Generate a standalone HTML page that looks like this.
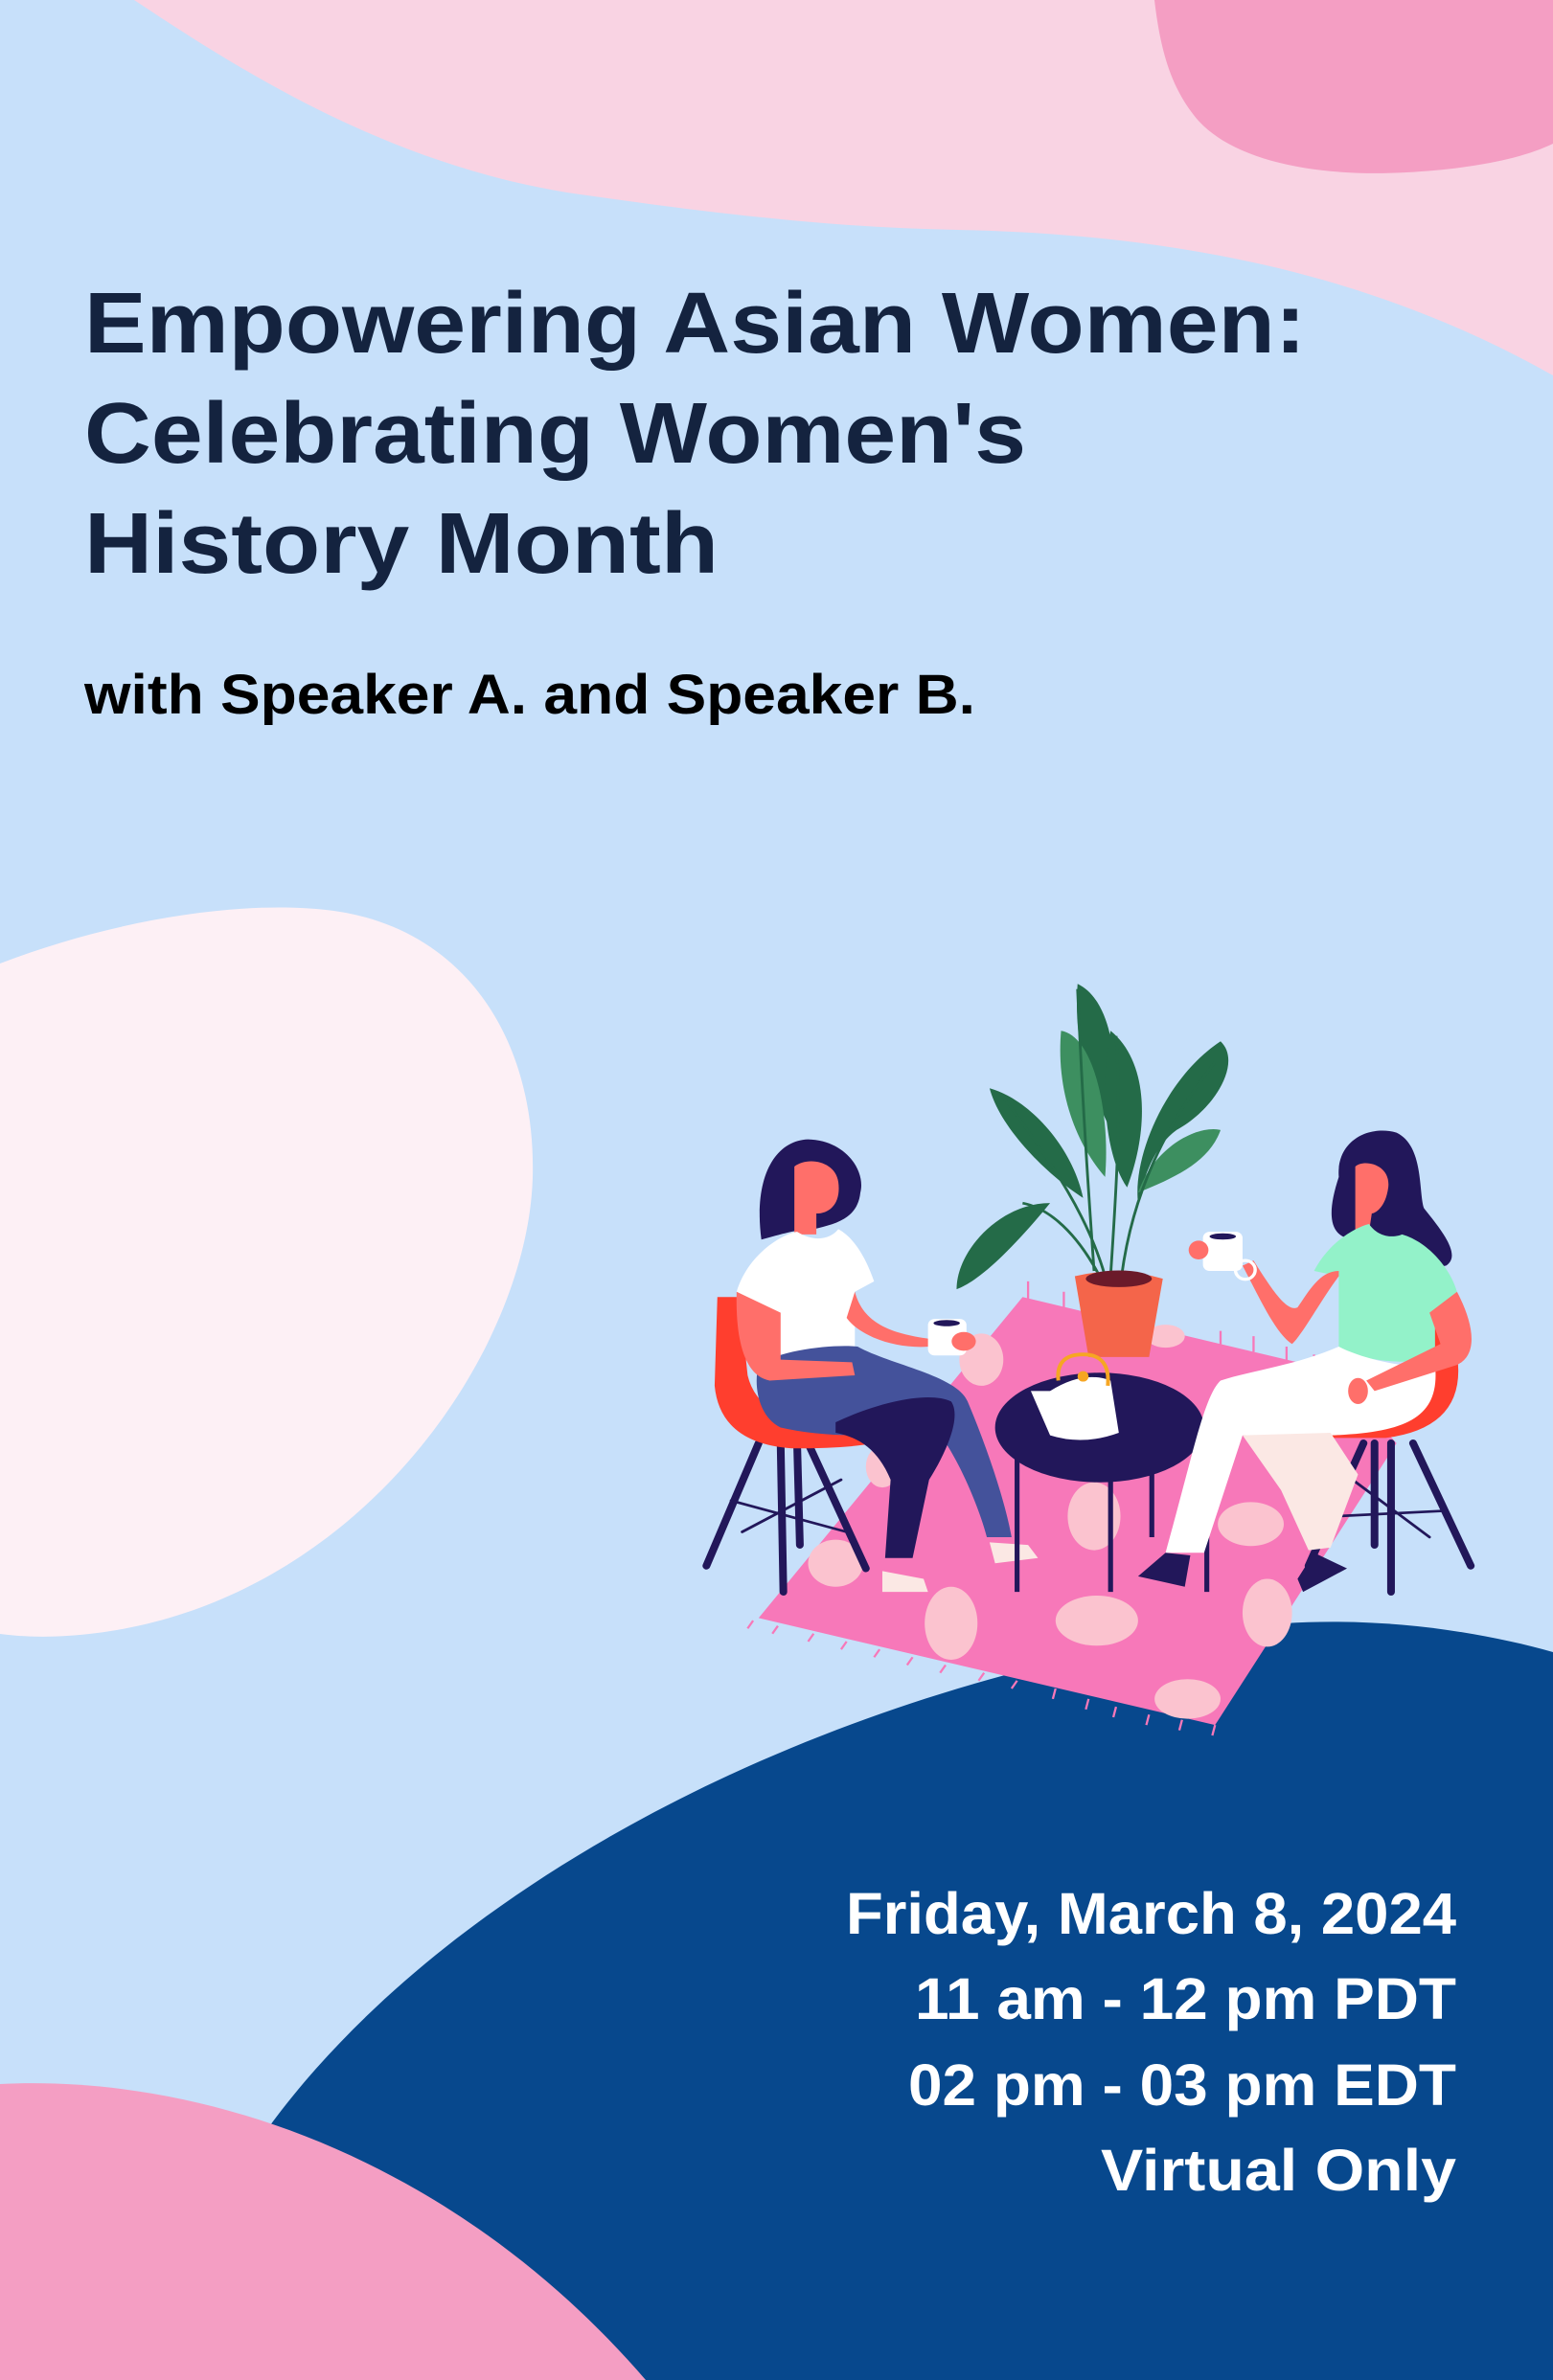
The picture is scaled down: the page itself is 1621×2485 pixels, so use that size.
<!DOCTYPE html>
<html><head><meta charset="utf-8"><style>
html,body{margin:0;padding:0;background:#c7e0fa}
svg{display:block}
</style></head><body>
<svg width="1621" height="2485" viewBox="0 0 1621 2485" xmlns="http://www.w3.org/2000/svg">
<rect width="1621" height="2485" fill="#c7e0fa"/>
<path d="M140,0 C260,80 420,180 620,205 C760,225 880,238 1000,240 C1240,245 1440,290 1621,392 L1621,0 Z" fill="#f9d3e3"/>
<path d="M1205,0 C1212,60 1225,95 1250,125 C1290,170 1380,185 1468,180 C1540,176 1590,165 1621,150 L1621,0 Z" fill="#f49ec3"/>
<path d="M0,1006 C120,960 250,940 340,950 C480,965 560,1080 556,1230 C550,1420 360,1690 70,1708 C40,1710 15,1708 0,1706 Z" fill="#fdf0f5"/>
<path d="M282,2219 C480,1950 900,1740 1340,1695 C1450,1688 1550,1705 1621,1725 L1621,2485 L282,2485 Z" fill="#07488d"/>
<path d="M0,2176 C220,2165 480,2260 674,2485 L0,2485 Z" fill="#f49ec3"/>

<g font-family="Liberation Sans, sans-serif" font-weight="bold" fill="#14233f">
<text x="88" y="368" font-size="90" textLength="1275" lengthAdjust="spacingAndGlyphs">Empowering Asian Women:</text>
<text x="88" y="483" font-size="90" textLength="983" lengthAdjust="spacingAndGlyphs">Celebrating Women's</text>
<text x="88" y="598" font-size="90" textLength="662" lengthAdjust="spacingAndGlyphs">History Month</text>
<text x="88" y="745" font-size="58" fill="#000" textLength="930" lengthAdjust="spacingAndGlyphs">with Speaker A. and Speaker B.</text>
</g>
<g font-family="Liberation Sans, sans-serif" font-weight="bold" fill="#fff" font-size="61">
<text x="883" y="2019" textLength="637" lengthAdjust="spacingAndGlyphs">Friday, March 8, 2024</text>
<text x="955" y="2108" textLength="565" lengthAdjust="spacingAndGlyphs">11 am - 12 pm PDT</text>
<text x="948" y="2198" textLength="572" lengthAdjust="spacingAndGlyphs">02 pm - 03 pm EDT</text>
<text x="1149" y="2287" textLength="371" lengthAdjust="spacingAndGlyphs">Virtual Only</text>
</g>

<g transform="translate(700,1000) scale(0.574,0.545)">
<!-- rug -->
<polygon points="640,650 1200,790 1320,930 990,1470 160,1265" fill="#f778b9"/>
<g stroke="#f778b9" stroke-width="4">
<path d="M650,620 v40 M715,640 v30 M1000,715 v30 M1060,725 v30 M1120,745 v30 M1170,760 v30"/>
<path d="M150,1270 l-10,15 M195,1280 l-10,15 M260,1295 l-10,15 M320,1310 l-10,15 M380,1325 l-10,15 M440,1340 l-10,15 M500,1355 l-10,15 M570,1370 l-10,15 M630,1385 l-10,15 M700,1400 l-5,20 M760,1420 l-5,20 M810,1435 l-5,20 M870,1450 l-5,20 M930,1460 l-5,20 M990,1470 l-5,20"/>
</g>
<g fill="#fbc3cf">
<ellipse cx="510" cy="1275" rx="48" ry="70"/>
<ellipse cx="775" cy="1270" rx="75" ry="48"/>
<ellipse cx="1085" cy="1255" rx="45" ry="65"/>
<ellipse cx="940" cy="1420" rx="60" ry="38"/>
<ellipse cx="300" cy="1160" rx="50" ry="45"/>
<ellipse cx="770" cy="1070" rx="48" ry="65"/>
<ellipse cx="1055" cy="1085" rx="60" ry="42"/>
<ellipse cx="565" cy="770" rx="40" ry="50"/>
<ellipse cx="900" cy="725" rx="35" ry="22"/>
<ellipse cx="385" cy="975" rx="30" ry="40"/>
</g>
<!-- plant -->
<g fill="#246b48">
<path d="M740,50 C800,80 820,200 800,330 C780,280 730,200 740,50Z"/>
<path d="M800,140 C870,200 870,330 830,440 C790,380 780,250 800,140Z"/>
<path d="M1000,160 C1040,200 990,290 920,330 C880,360 860,420 850,470 C840,380 900,230 1000,160Z"/>
<path d="M580,250 C650,270 730,360 750,460 C690,420 600,330 580,250Z"/>
<path d="M690,470 C600,470 520,560 520,635 C560,620 620,560 690,470Z"/>
</g>
<g fill="#3d8f60">
<path d="M710,140 C770,150 800,300 790,420 C740,360 700,260 710,140Z"/>
<path d="M1000,330 C960,320 880,360 850,450 C920,420 980,390 1000,330Z"/>
</g>
<g stroke="#246b48" stroke-width="5" fill="none">
<path d="M770,600 C760,450 750,300 740,60 M800,610 C810,450 820,300 810,150 M820,610 C840,450 900,320 990,200 M790,610 C760,500 700,400 600,260 M780,610 C740,530 690,480 640,470"/>
</g>
<path d="M735,610 Q815,590 895,615 L870,765 L760,765 Z" fill="#f4654a"/>
<ellipse cx="815" cy="615" rx="60" ry="16" fill="#6b1a2a"/>
<!-- left chair -->
<g stroke="#22175a" stroke-width="14" stroke-linecap="round">
<path d="M160,930 L65,1165 M200,930 L205,1215 M250,930 L355,1170 M230,930 L235,1125"/>
<path d="M110,1040 L320,1100 M130,1100 L310,1000" stroke-width="5"/>
</g>
<path d="M85,650 L125,650 L140,800 Q160,890 300,900 L390,920 Q370,940 220,940 Q90,930 80,820 Z" fill="#ff3e2e"/>
<!-- left woman -->
<path d="M165,540 C150,420 190,350 250,348 C320,350 355,410 345,450 C340,500 300,510 260,520 C230,520 200,530 165,540Z" fill="#22175a"/>
<path d="M225,400 C250,380 300,390 305,430 C310,470 290,490 265,490 L265,530 L225,530 Z" fill="#ff6f6a"/>
<path d="M120,640 C140,570 200,530 230,525 C260,545 290,540 305,520 C340,540 360,590 370,620 L335,640 L335,745 C290,760 230,770 185,760 L190,680 Z" fill="#fff"/>
<path d="M160,780 C200,750 300,740 340,745 C400,780 520,800 540,850 C580,950 610,1050 620,1110 L575,1110 C560,1050 520,950 480,900 C400,920 280,920 200,900 C160,880 150,820 160,780Z" fill="#44529b"/>
<path d="M300,890 C380,850 470,830 510,850 C530,880 500,950 470,1000 L440,1150 L390,1150 L400,1000 C380,950 350,920 300,910 Z" fill="#22175a"/>
<path d="M385,1175 L460,1190 L468,1215 L385,1215Z M580,1120 L650,1125 L668,1150 L590,1160Z" fill="#fbe8e4"/>
<path d="M120,640 L200,680 L200,770 L330,775 L335,800 L180,810 C130,800 118,720 120,640Z" fill="#ff6f6a"/>
<path d="M335,640 C350,700 400,720 470,730 L470,745 C400,750 340,720 320,690Z" fill="#ff6f6a"/>
<rect x="468" y="692" width="70" height="70" rx="12" fill="#fff"/>
<ellipse cx="502" cy="700" rx="24" ry="6" fill="#22175a"/>
<ellipse cx="533" cy="735" rx="22" ry="18" fill="#ff6f6a"/>
<!-- table -->
<g stroke="#22175a" stroke-width="9">
<path d="M630,950 V1215 M800,990 V1215 M975,960 V1215 M875,980 V1110"/>
</g>
<ellipse cx="780" cy="900" rx="190" ry="105" fill="#22175a"/>
<path d="M690,830 Q750,790 800,810 L815,910 Q750,935 690,915 L655,830 Z" fill="#fff"/>
<path d="M705,810 Q700,760 750,760 Q800,760 795,820" stroke="#f6a623" stroke-width="7" fill="none"/>
<circle cx="750" cy="802" r="10" fill="#f6a623"/>
<!-- right chair -->
<g stroke="#22175a" stroke-width="14" stroke-linecap="round">
<path d="M1260,930 L1160,1165 M1310,930 L1310,1215 M1350,930 L1455,1165 M1280,930 L1280,1125"/>
<path d="M1210,1070 L1400,1060 M1240,1000 L1380,1110" stroke-width="5"/>
</g>
<path d="M1380,690 L1430,760 Q1450,900 1300,920 L1120,920 L1130,890 L1330,880 Z" fill="#ff3e2e"/>
<!-- right woman -->
<path d="M1215,420 C1210,350 1270,320 1320,335 C1370,360 1360,450 1370,480 C1400,520 1440,570 1410,590 C1360,600 1310,560 1250,540 C1200,540 1190,500 1215,420Z" fill="#22175a"/>
<path d="M1245,400 C1260,385 1310,395 1305,440 C1300,480 1280,490 1275,490 L1270,525 L1245,525 Z" fill="#ff6f6a"/>
<path d="M1170,600 C1200,540 1250,515 1270,510 C1290,540 1320,535 1330,530 C1380,545 1420,600 1430,640 L1390,680 L1390,770 C1320,780 1260,770 1215,750 L1215,610 Z" fill="#93f2c9"/>
<path d="M1215,745 C1260,770 1350,790 1390,780 C1400,880 1340,910 1200,915 L1040,915 L970,1140 L900,1140 C950,950 970,840 1000,810 C1060,790 1140,780 1215,745Z" fill="#fff"/>
<path d="M1040,915 L1200,910 L1250,990 L1200,1130 L1160,1135 L1110,1020 Z" fill="#fbe8e4"/>
<path d="M900,1140 L945,1145 L935,1205 L850,1185 Z M1170,1140 L1230,1170 L1150,1215 L1140,1190Z" fill="#22175a"/>
<path d="M1430,640 C1460,700 1470,760 1430,780 L1280,830 L1265,810 L1400,740 L1380,680Z" fill="#ff6f6a"/>
<ellipse cx="1250" cy="830" rx="18" ry="25" fill="#ff6f6a"/>
<path d="M1215,610 C1180,660 1150,720 1130,740 C1100,720 1070,650 1040,590 L1060,580 C1090,630 1120,680 1140,670 C1160,640 1180,600 1215,600Z" fill="#ff6f6a"/>
<rect x="968" y="525" width="72" height="75" rx="12" fill="#fff"/>
<ellipse cx="1004" cy="534" rx="24" ry="6" fill="#22175a"/>
<ellipse cx="960" cy="560" rx="18" ry="18" fill="#ff6f6a"/>
<circle cx="1045" cy="598" r="18" stroke="#fff" stroke-width="6" fill="none"/>
</g>
</svg>
</body></html>
